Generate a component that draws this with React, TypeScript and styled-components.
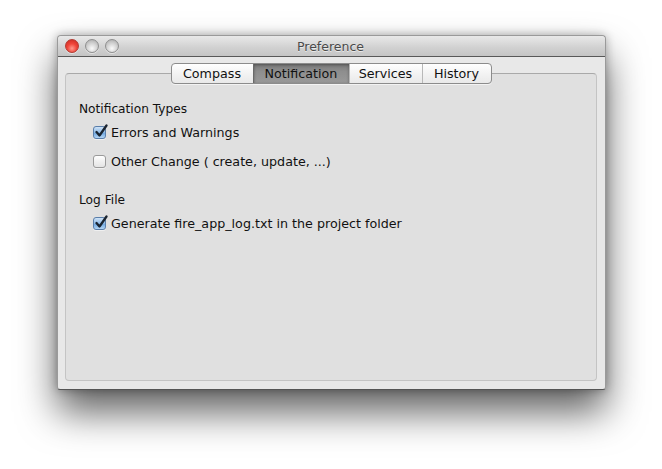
import React from "react";
import styled, { createGlobalStyle } from "styled-components";

const Global = createGlobalStyle`
  html, body { margin: 0; padding: 0; background: #ffffff; }
  body { font-family: "DejaVu Sans", "Liberation Sans", sans-serif; }
  * { box-sizing: border-box; }
`;

const Page = styled.div`
  width: 662px;
  height: 469px;
  padding: 35px 0 0 57px;
  overflow: hidden;
`;

const Window = styled.div`
  width: 549px;
  height: 355px;
  display: flex;
  flex-direction: column;
  background: #e8e8e8;
  border-radius: 4px 4px 3px 3px;
  border: 1px solid #9a9a9a;
  border-bottom-color: #555;
  box-shadow: 0 22px 38px rgba(0, 0, 0, 0.62), 0 0 10px rgba(0, 0, 0, 0.3);
`;

const TitleBar = styled.div`
  height: 21px;
  flex: none;
  position: relative;
  display: flex;
  align-items: center;
  justify-content: center;
  background: linear-gradient(#e9e9e9, #d0d0d0 60%, #c4c4c4);
  border-bottom: 1px solid #585858;
  border-radius: 4px 4px 0 0;
`;

const Lights = styled.div`
  position: absolute;
  left: 7px;
  top: 3px;
  display: flex;
  gap: 6px;
`;

const Light = styled.span<{ $red?: boolean }>`
  width: 14px;
  height: 14px;
  border-radius: 50%;
  border: 1px solid ${(p) => (p.$red ? "#b33a32" : "#8f8f8f")};
  background: ${(p) =>
    p.$red
      ? "radial-gradient(circle at 50% 70%, #ff9a8e 0%, #f0463a 45%, #c5271f 100%)"
      : "radial-gradient(circle at 50% 70%, #fafafa 0%, #d2d2d2 50%, #a5a5a5 100%)"};
  box-shadow: 0 1px 0 rgba(255, 255, 255, 0.5);
`;

const Title = styled.div`
  font-size: 12.5px;
  color: #4a4a4a;
  text-shadow: 0 1px 0 rgba(255, 255, 255, 0.6);
  margin-left: -2px;
`;

const Body = styled.div`
  flex: 1;
  display: flex;
  flex-direction: column;
  padding: 6px 8px 8px 7px;
`;

const Tabs = styled.div`
  align-self: center;
  display: flex;
  height: 21px;
  position: relative;
  z-index: 1;
  border: 1px solid #8c8c8c;
  border-radius: 4px;
  overflow: hidden;
  background: linear-gradient(#ffffff, #f3f3f3 50%, #e9e9e9);
  box-shadow: 0 1px 0 rgba(255, 255, 255, 0.6);
`;

const Tab = styled.div<{ $active?: boolean; $w: number }>`
  width: ${(p) => p.$w}px;
  display: flex;
  align-items: center;
  justify-content: center;
  font-size: 12.7px;
  color: #111;
  border-left: 1px solid ${(p) => (p.$active ? "#6a6a6a" : "#b8b8b8")};
  &:first-child { border-left: none; }
  background: ${(p) =>
    p.$active ? "linear-gradient(#7a7a7a, #8e8e8e 40%, #999999)" : "transparent"};
  box-shadow: ${(p) => (p.$active ? "inset 0 1px 3px rgba(0,0,0,0.35)" : "none")};
`;

const Box = styled.div`
  flex: 1;
  margin-top: -11px;
  background: #e0e0e0;
  border: 1px solid #c4c4c4;
  border-top-color: #a9a9a9;
  border-radius: 4px;
  padding: 28px 14px 0 13px;
  display: flex;
  flex-direction: column;
`;

const Section = styled.div<{ $gap?: number }>`
  display: flex;
  flex-direction: column;
  margin-top: ${(p) => p.$gap ?? 0}px;
`;

const Heading = styled.div`
  font-size: 12.2px;
  color: #111;
  height: 15px;
  line-height: 15px;
  margin-bottom: 7px;
`;

const Row = styled.label<{ $mb?: number }>`
  display: flex;
  align-items: center;
  gap: 5px;
  height: 16px;
  padding-left: 14px;
  margin-bottom: ${(p) => p.$mb ?? 0}px;
  font-size: 12.7px;
  color: #111;
`;

const BoxMark = styled.span<{ $on?: boolean }>`
  position: relative;
  width: 13px;
  height: 13px;
  flex: none;
  border-radius: 3px;
  border: 1px solid ${(p) => (p.$on ? "#5a7eaa" : "#9a9a9a")};
  background: ${(p) =>
    p.$on
      ? "linear-gradient(#cfe3f7, #8db9e6 50%, #6aa3dd 51%, #b4d6f6)"
      : "linear-gradient(#ffffff, #f0f0f0 50%, #e4e4e4)"};
  box-shadow: 0 1px 0 rgba(255, 255, 255, 0.5);
`;

const Check = styled.svg`
  position: absolute;
  left: 0px;
  top: -3px;
  width: 14px;
  height: 14px;
`;

function Checkbox({ on, label, mb }: { on?: boolean; label: string; mb?: number }) {
  return (
    <Row $mb={mb}>
      <BoxMark $on={on}>
        {on && (
          <Check viewBox="0 0 14 14">
            <path
              d="M2.5 8 L5.5 11.5 L12.5 1.5"
              fill="none"
              stroke="#1a2430"
              strokeWidth="2.3"
              strokeLinecap="round"
              strokeLinejoin="round"
            />
          </Check>
        )}
      </BoxMark>
      <span>{label}</span>
    </Row>
  );
}

export default function App() {
  return (
    <>
      <Global />
      <Page>
        <Window>
          <TitleBar>
            <Lights>
              <Light $red />
              <Light />
              <Light />
            </Lights>
            <Title>Preference</Title>
          </TitleBar>
          <Body>
            <Tabs>
              <Tab $w={81}>Compass</Tab>
              <Tab $w={96} $active>
                Notification
              </Tab>
              <Tab $w={73}>Services</Tab>
              <Tab $w={69}>History</Tab>
            </Tabs>
            <Box>
              <Section>
                <Heading>Notification Types</Heading>
                <Checkbox on label="Errors and Warnings" mb={13} />
                <Checkbox label="Other Change ( create, update, ...)" />
              </Section>
              <Section $gap={24}>
                <Heading>Log File</Heading>
                <Checkbox on label="Generate fire_app_log.txt in the project folder" />
              </Section>
            </Box>
          </Body>
        </Window>
      </Page>
    </>
  );
}
